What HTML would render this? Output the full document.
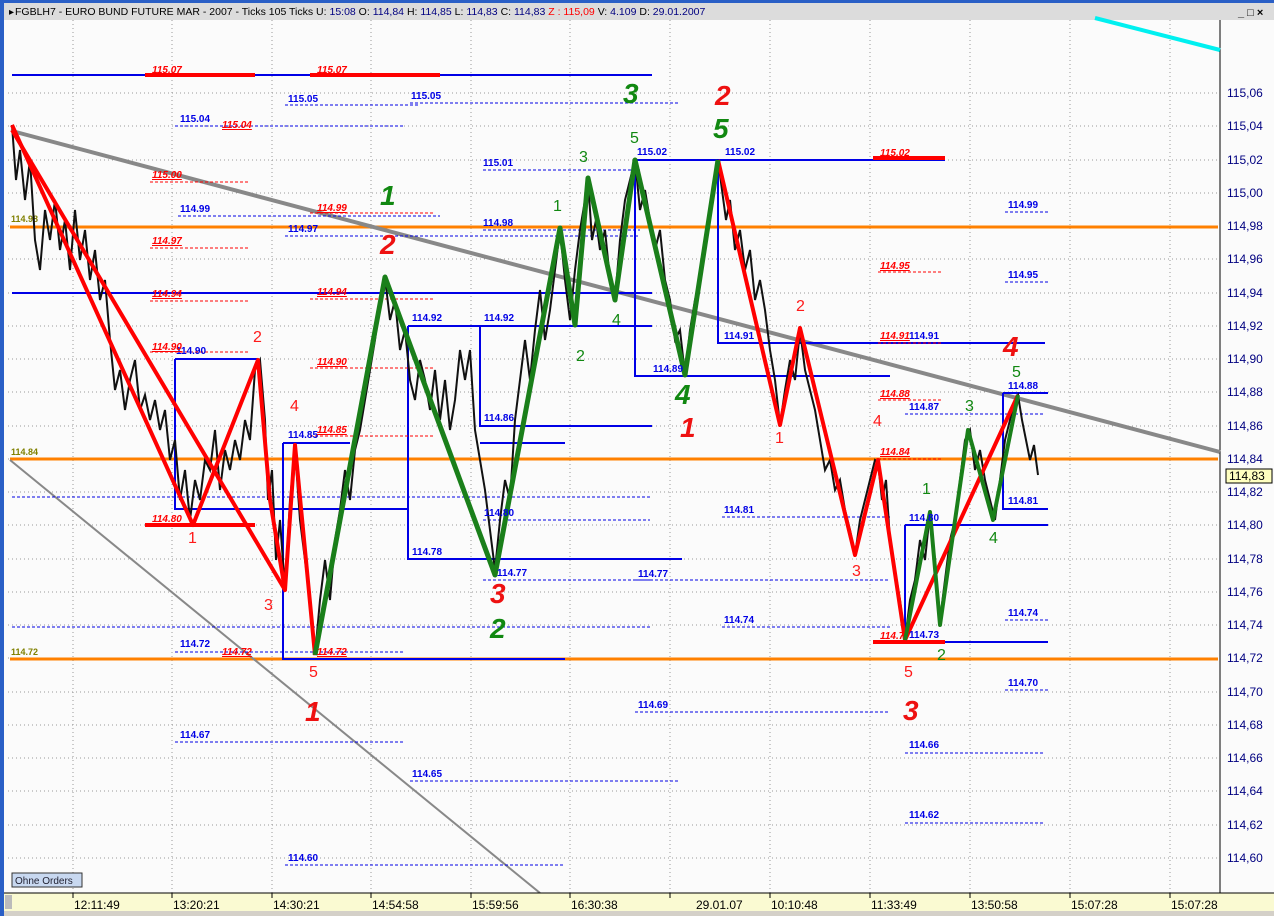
<!DOCTYPE html>
<html><head><meta charset="utf-8"><style>
html,body{margin:0;padding:0;width:1274px;height:916px;overflow:hidden;background:#fbfbfb;font-family:"Liberation Sans",sans-serif}
svg{display:block}
.b{fill:#0000e6;font:bold 10px "Liberation Sans",sans-serif}
.r{fill:#ff0000;font:italic bold 10px "Liberation Sans",sans-serif;text-decoration:underline}
.ax{fill:#000080;font:12px "Liberation Sans",sans-serif}
.tx{fill:#000;font:11px "Liberation Sans",sans-serif}
.rn{fill:#ff1a1a;font:16px "Liberation Sans",sans-serif}
.gn{fill:#118811;font:16px "Liberation Sans",sans-serif}
.RB{fill:#ee1111;font:italic bold 28px "Liberation Sans",sans-serif}
.GB{fill:#118811;font:italic bold 28px "Liberation Sans",sans-serif}
</style></head><body>
<svg width="1274" height="916" viewBox="0 0 1274 916" xmlns="http://www.w3.org/2000/svg">
<rect x="0" y="0" width="1274" height="916" fill="#fbfbfb"/>
<!-- header -->
<rect x="0" y="0" width="1274" height="3" fill="#2a5fc6"/>
<rect x="0" y="3" width="1274" height="17" fill="#dcdcdc"/>
<text x="9" y="15" class="tx" style="font-size:10px">▸</text>
<text x="15" y="15" class="tx" style="font-size:10.5px">FGBLH7 - EURO BUND FUTURE  MAR - 2007 - Ticks 105 Ticks  U: <tspan fill="#000080">15:08</tspan>  O: <tspan fill="#000080">114,84</tspan>  H: <tspan fill="#000080">114,85</tspan>  L: <tspan fill="#000080">114,83</tspan>  C: <tspan fill="#000080">114,83</tspan>  <tspan fill="#ff0000">Z : 115,09</tspan>  V: <tspan fill="#000080">4.109</tspan>  D: <tspan fill="#000080">29.01.2007</tspan></text>
<text x="1238" y="16" class="tx" style="font-size:11px;font-weight:bold">_ □ ×</text>
<rect x="0" y="0" width="4" height="916" fill="#2a5fc6"/>
<!-- grid -->
<g stroke="#999" stroke-width="1" stroke-dasharray="1,3">
<line x1="73" y1="20" x2="73" y2="893"/><line x1="172" y1="20" x2="172" y2="893"/><line x1="272" y1="20" x2="272" y2="893"/><line x1="371" y1="20" x2="371" y2="893"/><line x1="471" y1="20" x2="471" y2="893"/><line x1="570" y1="20" x2="570" y2="893"/><line x1="670" y1="20" x2="670" y2="893"/><line x1="770" y1="20" x2="770" y2="893"/><line x1="870" y1="20" x2="870" y2="893"/><line x1="970" y1="20" x2="970" y2="893"/><line x1="1070" y1="20" x2="1070" y2="893"/><line x1="1170" y1="20" x2="1170" y2="893"/>
<line x1="8" y1="93" x2="1220" y2="93"/><line x1="8" y1="126" x2="1220" y2="126"/><line x1="8" y1="160" x2="1220" y2="160"/><line x1="8" y1="193" x2="1220" y2="193"/><line x1="8" y1="226" x2="1220" y2="226"/><line x1="8" y1="259" x2="1220" y2="259"/><line x1="8" y1="293" x2="1220" y2="293"/><line x1="8" y1="326" x2="1220" y2="326"/><line x1="8" y1="359" x2="1220" y2="359"/><line x1="8" y1="392" x2="1220" y2="392"/><line x1="8" y1="426" x2="1220" y2="426"/><line x1="8" y1="459" x2="1220" y2="459"/><line x1="8" y1="492" x2="1220" y2="492"/><line x1="8" y1="525" x2="1220" y2="525"/><line x1="8" y1="559" x2="1220" y2="559"/><line x1="8" y1="592" x2="1220" y2="592"/><line x1="8" y1="625" x2="1220" y2="625"/><line x1="8" y1="658" x2="1220" y2="658"/><line x1="8" y1="692" x2="1220" y2="692"/><line x1="8" y1="725" x2="1220" y2="725"/><line x1="8" y1="758" x2="1220" y2="758"/><line x1="8" y1="791" x2="1220" y2="791"/><line x1="8" y1="825" x2="1220" y2="825"/><line x1="8" y1="858" x2="1220" y2="858"/>
</g>
<!-- right axis -->
<line x1="1220" y1="20" x2="1220" y2="893" stroke="#000" stroke-width="1"/>
<g class="ax">
<text x="1227" y="97">115,06</text><text x="1227" y="130">115,04</text><text x="1227" y="164">115,02</text><text x="1227" y="197">115,00</text><text x="1227" y="230">114,98</text><text x="1227" y="263">114,96</text><text x="1227" y="297">114,94</text><text x="1227" y="330">114,92</text><text x="1227" y="363">114,90</text><text x="1227" y="396">114,88</text><text x="1227" y="430">114,86</text><text x="1227" y="463">114,84</text><text x="1227" y="496">114,82</text><text x="1227" y="529">114,80</text><text x="1227" y="563">114,78</text><text x="1227" y="596">114,76</text><text x="1227" y="629">114,74</text><text x="1227" y="662">114,72</text><text x="1227" y="696">114,70</text><text x="1227" y="729">114,68</text><text x="1227" y="762">114,66</text><text x="1227" y="795">114,64</text><text x="1227" y="829">114,62</text><text x="1227" y="862">114,60</text>
</g>
<rect x="1226" y="469" width="46" height="14" fill="#ffffc0" stroke="#000" stroke-width="1"/>
<text x="1229" y="480" class="tx" style="font-size:12px">114,83</text>
<!-- orange lines -->
<g stroke="#ff8000" stroke-width="3"><line x1="10" y1="227" x2="1218" y2="227"/><line x1="10" y1="459" x2="1218" y2="459"/><line x1="10" y1="659" x2="1218" y2="659"/></g>
<text x="11" y="222" style="fill:#808000;font:bold 9px 'Liberation Sans'">114.98</text>
<text x="11" y="455" style="fill:#808000;font:bold 9px 'Liberation Sans'">114.84</text>
<text x="11" y="655" style="fill:#808000;font:bold 9px 'Liberation Sans'">114.72</text>
<!-- trend lines -->
<line x1="12" y1="131" x2="1220" y2="452" stroke="#888" stroke-width="4"/>
<line x1="10" y1="460" x2="540" y2="893" stroke="#888" stroke-width="2"/>
<line x1="1095" y1="18" x2="1220" y2="50" stroke="#00f0f0" stroke-width="4"/>
<!-- blue solid lines / boxes -->
<g stroke="#0000e6" stroke-width="2" fill="none">
<line x1="12" y1="75" x2="652" y2="75"/>
<line x1="12" y1="293" x2="652" y2="293"/>
<polyline points="175,359 258,359"/><polyline points="175,359 175,509 408,509 408,459 "/>
<polyline points="283,443 283,659 565,659"/><polyline points="283,443 350,443"/>
<polyline points="408,326 480,326 480,426 652,426"/><polyline points="408,326 408,559 682,559"/>
<polyline points="480,326 652,326"/><polyline points="565,443 480,443"/>
<polyline points="635,160 635,376 890,376"/><polyline points="635,160 945,160"/>
<polyline points="718,160 718,343 1045,343"/>
<polyline points="905,525 905,642 1048,642"/><polyline points="905,525 1048,525"/>
<polyline points="1003,393 1048,393"/><polyline points="1003,393 1003,509 1048,509"/>
</g>
<!-- red segments -->
<g stroke="#ff0000" stroke-width="4"><line x1="145" y1="75" x2="255" y2="75"/><line x1="310" y1="75" x2="440" y2="75"/><line x1="873" y1="158" x2="945" y2="158"/><line x1="145" y1="525" x2="255" y2="525"/><line x1="873" y1="642" x2="945" y2="642"/></g>
<!-- blue dashed -->
<g stroke="#0000e6" stroke-width="1" stroke-dasharray="3,2">
<line x1="285" y1="105" x2="420" y2="105"/><line x1="410" y1="103" x2="680" y2="103"/>
<line x1="175" y1="126" x2="405" y2="126"/><line x1="483" y1="170" x2="640" y2="170"/>
<line x1="178" y1="216" x2="440" y2="216"/><line x1="285" y1="236" x2="640" y2="236"/><line x1="483" y1="230" x2="640" y2="230"/>
<line x1="12" y1="497" x2="652" y2="497"/><line x1="12" y1="627" x2="652" y2="627"/>
<line x1="175" y1="652" x2="405" y2="652"/><line x1="175" y1="742" x2="405" y2="742"/>
<line x1="410" y1="781" x2="680" y2="781"/><line x1="285" y1="865" x2="563" y2="865"/>
<line x1="483" y1="520" x2="650" y2="520"/><line x1="483" y1="580" x2="650" y2="580"/>
<line x1="635" y1="580" x2="890" y2="580"/><line x1="635" y1="712" x2="890" y2="712"/>
<line x1="722" y1="517" x2="890" y2="517"/><line x1="722" y1="627" x2="890" y2="627"/>
<line x1="905" y1="414" x2="1045" y2="414"/><line x1="905" y1="753" x2="1045" y2="753"/><line x1="905" y1="823" x2="1045" y2="823"/>
<line x1="1005" y1="212" x2="1048" y2="212"/><line x1="1005" y1="282" x2="1048" y2="282"/><line x1="1005" y1="620" x2="1048" y2="620"/><line x1="1005" y1="690" x2="1048" y2="690"/>
</g>
<!-- red dashed -->
<g stroke="#ff0000" stroke-width="1" stroke-dasharray="3,2">
<line x1="150" y1="182" x2="250" y2="182"/><line x1="150" y1="248" x2="250" y2="248"/><line x1="150" y1="301" x2="250" y2="301"/><line x1="150" y1="352" x2="250" y2="352"/>
<line x1="310" y1="213" x2="435" y2="213"/><line x1="310" y1="299" x2="435" y2="299"/><line x1="310" y1="368" x2="435" y2="368"/><line x1="310" y1="436" x2="435" y2="436"/>
<line x1="878" y1="272" x2="942" y2="272"/><line x1="878" y1="343" x2="942" y2="343"/><line x1="878" y1="400" x2="942" y2="400"/><line x1="878" y1="459" x2="942" y2="459"/>
</g>
<!-- price bars approximation -->
<polyline fill="none" stroke="#111" stroke-width="2" points="12,125 16,180 20,150 25,200 30,160 35,240 40,270 45,210 50,240 55,200 60,250 65,220 70,270 75,210 80,260 85,230 90,280 95,250 100,300 105,280 110,340 115,390 120,370 125,410 130,380 135,360 140,410 145,395 150,420 155,400 160,430 165,410 170,460 175,440 180,500 185,470 190,520 195,480 200,500 205,460 210,470 215,430 220,490 225,450 230,470 235,440 240,460 245,420 250,440 255,370 260,360 265,420 268,500 272,470 276,560 280,520 285,590 290,500 295,450 300,520 305,560 310,600 315,655 320,600 325,560 330,600 335,540 340,510 345,470 350,500 355,450 360,430 365,400 370,370 375,340 380,300 385,278 390,320 395,300 400,350 405,330 410,380 415,400 420,360 425,380 430,410 435,370 440,420 445,380 450,430 455,400 460,350 465,380 470,350 475,430 480,460 485,490 490,530 495,570 500,520 505,480 510,500 515,420 520,380 525,340 530,380 535,330 540,290 545,340 550,310 555,270 560,230 565,280 570,320 575,270 580,230 585,200 588,180 592,240 596,220 600,250 605,230 610,280 615,300 620,240 625,200 630,180 635,160 640,210 645,190 650,220 655,250 660,230 665,280 670,300 675,340 680,330 685,375 690,330 695,300 700,280 705,250 710,210 715,180 718,160 722,190 726,220 730,200 735,250 740,230 745,270 750,250 755,300 760,280 765,310 770,350 775,380 780,425 785,390 790,360 795,380 800,330 805,370 810,390 815,410 820,440 825,470 830,460 835,490 840,480 845,510 850,530 855,555 860,520 865,500 870,480 875,460 878,462 882,500 886,480 890,540 895,570 900,600 905,640 910,600 915,580 920,540 925,560 930,512 935,560 940,620 945,580 950,540 955,520 960,480 965,440 970,430 975,470 980,450 985,480 990,500 995,520 1000,480 1005,440 1010,420 1015,400 1018,395 1022,420 1026,440 1030,460 1034,445 1038,475"/>
<!-- zigzags -->
<g fill="none" stroke-linejoin="round">
<polyline stroke="#ff0000" stroke-width="4" points="12,125 193,525 258,360 270,500 285,590 295,445 315,655"/>
<line x1="12" y1="130" x2="285" y2="590" stroke="#ff0000" stroke-width="4"/>
<polyline stroke="#ff0000" stroke-width="4" points="718,160 780,425 800,328 855,555 878,460 905,640 1018,395"/>
<polyline stroke="#1a7f1a" stroke-width="5" points="315,655 385,277 495,575 560,228 575,325 588,178 615,300 635,160 685,375 718,160"/>
<polyline stroke="#1a7f1a" stroke-width="4" points="905,640 930,512 940,625 968,430 993,520 1018,395"/>
</g>
<!-- blue labels -->
<g class="b">
<text x="180" y="122">115.04</text><text x="288" y="102">115.05</text><text x="411" y="99">115.05</text><text x="483" y="166">115.01</text><text x="637" y="155">115.02</text><text x="725" y="155">115.02</text>
<text x="180" y="212">114.99</text><text x="288" y="232">114.97</text><text x="483" y="226">114.98</text><text x="1008" y="208">114.99</text><text x="1008" y="278">114.95</text>
<text x="176" y="354">114.90</text><text x="412" y="321">114.92</text><text x="484" y="321">114.92</text><text x="288" y="438">114.85</text><text x="484" y="421">114.86</text>
<text x="653" y="372">114.89</text><text x="724" y="339">114.91</text><text x="909" y="339">114.91</text><text x="909" y="410">114.87</text><text x="1008" y="389">114.88</text><text x="1008" y="504">114.81</text>
<text x="412" y="555">114.78</text><text x="484" y="516">114.80</text><text x="497" y="576">114.77</text><text x="638" y="577">114.77</text><text x="724" y="513">114.81</text><text x="909" y="521">114.80</text>
<text x="180" y="647">114.72</text><text x="724" y="623">114.74</text><text x="909" y="638">114.73</text><text x="1008" y="616">114.74</text><text x="1008" y="686">114.70</text><text x="638" y="708">114.69</text>
<text x="180" y="738">114.67</text><text x="909" y="748">114.66</text><text x="412" y="777">114.65</text><text x="909" y="818">114.62</text><text x="288" y="861">114.60</text>
</g>
<!-- red labels -->
<g class="r">
<text x="152" y="73">115.07</text><text x="317" y="73">115.07</text><text x="222" y="128">115.04</text><text x="152" y="178">115.00</text><text x="880" y="156">115.02</text>
<text x="152" y="244">114.97</text><text x="317" y="211">114.99</text><text x="152" y="297">114.94</text><text x="317" y="295">114.94</text>
<text x="152" y="350">114.90</text><text x="317" y="365">114.90</text><text x="317" y="433">114.85</text><text x="152" y="522">114.80</text><text x="222" y="655">114.72</text><text x="317" y="655">114.72</text>
<text x="880" y="269">114.95</text><text x="880" y="339">114.91</text><text x="880" y="397">114.88</text><text x="880" y="455">114.84</text><text x="880" y="639">114.7</text>
</g>
<!-- small wave numbers -->
<g class="rn">
<text x="188" y="543">1</text><text x="253" y="342">2</text><text x="264" y="610">3</text><text x="290" y="411">4</text><text x="309" y="677">5</text>
<text x="775" y="443">1</text><text x="796" y="311">2</text><text x="852" y="576">3</text><text x="873" y="426">4</text><text x="904" y="677">5</text>
</g>
<g class="gn">
<text x="553" y="211">1</text><text x="576" y="361">2</text><text x="579" y="162">3</text><text x="612" y="325">4</text><text x="630" y="143">5</text>
<text x="922" y="494">1</text><text x="937" y="660">2</text><text x="965" y="411">3</text><text x="989" y="543">4</text><text x="1012" y="377">5</text>
</g>
<!-- big labels -->
<text x="380" y="205" class="GB">1</text><text x="380" y="254" class="RB">2</text>
<text x="623" y="103" class="GB">3</text><text x="715" y="105" class="RB">2</text><text x="713" y="138" class="GB">5</text>
<text x="675" y="404" class="GB">4</text><text x="680" y="437" class="RB">1</text>
<text x="490" y="603" class="RB">3</text><text x="490" y="638" class="GB">2</text>
<text x="305" y="721" class="RB">1</text><text x="903" y="720" class="RB">3</text><text x="1003" y="356" class="RB">4</text>
<!-- ohne orders -->
<rect x="12" y="873" width="70" height="14" fill="#c8d8f0" stroke="#333" stroke-width="1"/>
<text x="15" y="884" class="tx" style="font-size:10px;fill:#223">Ohne Orders</text>
<!-- time axis -->
<rect x="4" y="893" width="1270" height="18" fill="#fafad2"/>
<line x1="4" y1="893" x2="1274" y2="893" stroke="#000" stroke-width="1"/>
<rect x="5" y="895" width="7" height="14" fill="#bbb"/>
<g stroke="#000"><line x1="73" y1="893" x2="73" y2="898"/><line x1="172" y1="893" x2="172" y2="898"/><line x1="272" y1="893" x2="272" y2="898"/><line x1="371" y1="893" x2="371" y2="898"/><line x1="471" y1="893" x2="471" y2="898"/><line x1="570" y1="893" x2="570" y2="898"/><line x1="670" y1="893" x2="670" y2="898"/><line x1="770" y1="893" x2="770" y2="898"/><line x1="870" y1="893" x2="870" y2="898"/><line x1="970" y1="893" x2="970" y2="898"/><line x1="1070" y1="893" x2="1070" y2="898"/><line x1="1170" y1="893" x2="1170" y2="898"/></g>
<g class="tx" style="font-size:12px">
<text x="74" y="909">12:11:49</text><text x="173" y="909">13:20:21</text><text x="273" y="909">14:30:21</text><text x="372" y="909">14:54:58</text><text x="472" y="909">15:59:56</text><text x="571" y="909">16:30:38</text><text x="696" y="909">29.01.07</text><text x="771" y="909">10:10:48</text><text x="871" y="909">11:33:49</text><text x="971" y="909">13:50:58</text><text x="1071" y="909">15:07:28</text><text x="1171" y="909">15:07:28</text>
</g>
<rect x="4" y="911" width="1270" height="5" fill="#d4d0c8"/>
</svg>
</body></html>
